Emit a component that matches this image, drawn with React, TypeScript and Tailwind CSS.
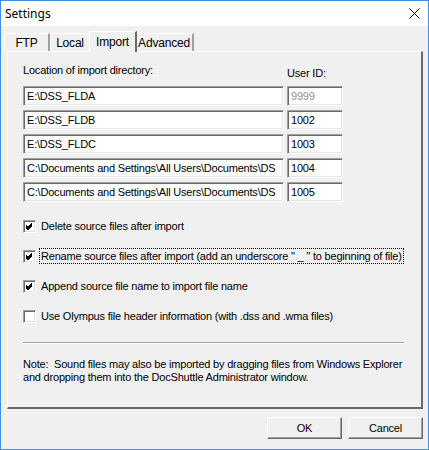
import React from "react"

const font = { fontFamily: '"Liberation Sans", Arial, sans-serif' }

const rows = [
    { path: "E:\\DSS_FLDA", id: "9999", disabled: true },
    { path: "E:\\DSS_FLDB", id: "1002" },
    { path: "E:\\DSS_FLDC", id: "1003" },
    { path: "C:\\Documents and Settings\\All Users\\Documents\\DS", id: "1004" },
    { path: "C:\\Documents and Settings\\All Users\\Documents\\DS", id: "1005" },
]

const checks = [
    { label: "Delete source files after import", checked: true },
    { label: "Rename source files after import (add an underscore \" _ \" to beginning of file)", checked: true, focus: true },
    { label: "Append source file name to import file name", checked: true },
    { label: "Use Olympus file header information (with .dss and .wma files)", checked: false },
]

const sunken = "border border-t-[#a0a0a0] border-l-[#a0a0a0] border-r-white border-b-white shadow-[inset_1px_1px_0_#696969,inset_-1px_-1px_0_#e3e3e3]"

function CheckBox({ checked }: { checked: boolean }) {
    return (
        <div className={`w-[13px] h-[13px] bg-white shrink-0 ${sunken}`}>
            {checked && (
                <svg width="11" height="11" viewBox="0 0 11 11" className="block">
                    <path d="M2 4.5 L4 6.5 L8 2.5 M2 5.5 L4 7.5 L8 3.5 M2 6.5 L4 8.5 L8 4.5" stroke="#000" strokeWidth="1" fill="none" shapeRendering="crispEdges" />
                </svg>
            )}
        </div>
    )
}

function Tab({ label, w, active }: { label: string; w: string; active?: boolean }) {
    if (active) {
        return (
            <div className={`relative z-10 -mb-[1px] -mx-[2px] h-[21px] pt-[2px] text-center bg-[#f0f0f0] border-t border-l border-white border-r-2 border-r-[#696969] leading-[16px] ${w}`}>
                {label}
            </div>
        )
    }
    return (
        <div className={`h-[18px] mt-[2px] pt-[2px] text-center border-t border-l border-white border-r-2 border-r-[#a0a0a0] leading-[14px] ${w}`}>
            {label}
        </div>
    )
}

function Button({ label }: { label: string }) {
    return (
        <div className="w-[75px] h-[22px] flex items-center justify-center border border-t-white border-l-white border-r-[#696969] border-b-[#696969] shadow-[inset_-1px_-1px_0_#a0a0a0]">
            {label}
        </div>
    )
}

export default function App() {
    return (
        <div style={font} className="w-[429px] h-[450px] border border-[#3c8ee8] bg-[#f0f0f0] text-black text-[11px] tracking-[-0.2px] flex flex-col overflow-hidden">
            <div className="h-[25px] bg-white flex items-center justify-between pl-[4px] pr-[8px] shrink-0 tracking-normal">
                <span className="text-[12px]" style={{ fontFamily: '"Noto Sans", "Liberation Sans", sans-serif' }}>Settings</span>
                <svg width="11" height="11" viewBox="0 0 11 11">
                    <path d="M0.5 0.5 L10.5 10.5 M10.5 0.5 L0.5 10.5" stroke="#000" strokeWidth="1" />
                </svg>
            </div>
            <div className="flex pl-[3px] pt-[5px] shrink-0 text-[12px]">
                <Tab label="FTP" w="w-[46px]" />
                <Tab label="Local" w="w-[41px]" />
                <Tab label="Import" w="w-[48px]" active />
                <Tab label="Advanced" w="w-[59px]" />
            </div>
            <div className="ml-[6px] w-[416px] h-[358px] border-t border-l border-white border-r-2 border-b-2 border-r-[#696969] border-b-[#696969] pl-[15px] pt-[12px] shrink-0">
                <div className="flex h-[22px] leading-[13px]">
                    <span className="w-[264px]">Location of import directory:</span>
                    <span className="pt-[3px]">User ID:</span>
                </div>
                <div className="flex flex-col gap-[4px]">
                    {rows.map(r => (
                        <div key={r.id} className="flex gap-[3px]">
                            <div className={`w-[261px] h-[20px] bg-white px-[3px] leading-[18px] overflow-hidden whitespace-nowrap ${sunken}`}>{r.path}</div>
                            <div className={`w-[56px] h-[20px] bg-white px-[3px] leading-[18px] ${sunken} ${r.disabled ? "text-[#8f8f8f]" : ""}`}>{r.id}</div>
                        </div>
                    ))}
                </div>
                <div className="flex flex-col gap-[16px] mt-[17px]">
                    {checks.map(c => (
                        <div key={c.label} className="flex items-center gap-[4px] h-[14px]">
                            <CheckBox checked={c.checked} />
                            <span className={`whitespace-nowrap leading-[14px] px-[1px] ${c.focus ? "outline outline-1 outline-dotted outline-black" : ""}`}>{c.label}</span>
                        </div>
                    ))}
                </div>
                <div className="mt-[19px] w-[381px] h-[2px] border-t border-[#a0a0a0] border-b border-b-white" />
                <p className="mt-[14px] leading-[13px] whitespace-nowrap">
                    Note:&nbsp; Sound files may also be imported by dragging files from Windows Explorer<br />
                    and dropping them into the DocShuttle Administrator window.
                </p>
            </div>
            <div className="flex justify-end gap-[6px] pr-[5px] mt-[8px]">
                <Button label="OK" />
                <Button label="Cancel" />
            </div>
        </div>
    )
}
